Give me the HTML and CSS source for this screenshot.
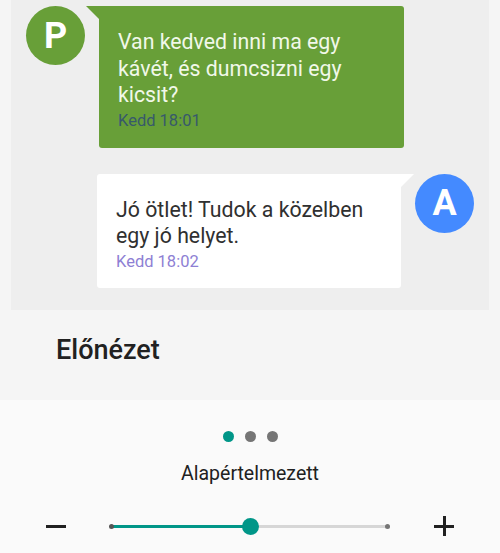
FILE: index.html
```html
<!DOCTYPE html>
<html lang="hu">
<head>
<meta charset="utf-8">
<link rel="stylesheet" href="styles.css">
</head>
<body>
<div class="top">
  <div class="chat">
    <div class="msg in">
      <div class="avatar green">P</div>
      <div class="bubble bubble-in">
        <div class="text">Van kedved inni ma egy kávét, és dumcsizni egy kicsit?</div>
        <div class="time">Kedd 18:01</div>
      </div>
    </div>
    <div class="msg out">
      <div class="bubble bubble-out">
        <div class="text">Jó ötlet! Tudok a közelben egy jó helyet.</div>
        <div class="time">Kedd 18:02</div>
      </div>
      <div class="avatar blue">A</div>
    </div>
  </div>
  <div class="preview">Előnézet</div>
</div>
<div class="controls">
  <div class="dots">
    <span class="dot active"></span>
    <span class="dot"></span>
    <span class="dot"></span>
  </div>
  <div class="label">Alapértelmezett</div>
  <div class="slider-row">
    <div class="minus"></div>
    <div class="track">
      <div class="fill"></div>
      <span class="end end-left"></span>
      <span class="end end-right"></span>
      <span class="thumb"></span>
    </div>
    <div class="plus"></div>
  </div>
</div>
</body>
</html>
```
FILE: styles.css
```css
* { box-sizing: border-box; }
html, body {
  margin: 0;
  padding: 0;
}
body {
  width: 500px;
  height: 553px;
  overflow: hidden;
  background: #fafafa;
  font-family: Roboto, "Noto Sans", sans-serif;
}
.top {
  background: #f5f5f5;
  padding: 0 11px;
}
.chat {
  background: #eeeeee;
  height: 310px;
  padding: 6px 15px 0 15px;
  display: flex;
  flex-direction: column;
  gap: 26px;
}
.msg {
  display: flex;
  align-items: flex-start;
  gap: 14px;
}
.msg.out {
  justify-content: flex-end;
}
.avatar {
  width: 59px;
  height: 59px;
  flex: none;
  border-radius: 50%;
  color: #ffffff;
  font-weight: 700;
  font-size: 36px;
  display: flex;
  align-items: center;
  justify-content: center;
}
.avatar.green { background: #689f38; }
.avatar.blue { background: #448aff; }
.bubble {
  position: relative;
  width: 304px;
  border-radius: 3px;
  padding: 23px 19px 17px 19px;
}
.bubble .text {
  font-size: 21.3px;
  line-height: 26.5px;
}
.bubble .time {
  font-size: 16.5px;
  line-height: 20px;
  margin-top: 2px;
}
.bubble-in {
  width: 305px;
  background: #689f38;
  border-top-left-radius: 0;
}
.bubble-in .text { color: #f1f8e9; }
.bubble-in .time { color: #37596b; }
.bubble-in::before {
  content: "";
  position: absolute;
  top: 0;
  left: -13px;
  width: 0;
  height: 0;
  border-top: 13px solid #689f38;
  border-left: 13px solid transparent;
}
.bubble-out {
  background: #ffffff;
  border-top-right-radius: 0;
  padding-bottom: 16px;
}
.bubble-out .text { color: #303030; }
.bubble-out .time { color: #8e7fd4; }
.bubble-out::before {
  content: "";
  position: absolute;
  top: 0;
  right: -13px;
  width: 0;
  height: 0;
  border-top: 13px solid #ffffff;
  border-right: 13px solid transparent;
}
.preview {
  height: 90px;
  display: flex;
  align-items: center;
  padding-left: 45px;
  padding-bottom: 10px;
  font-size: 27px;
  font-weight: 500;
  color: #212121;
}
.controls {
  background: #fafafa;
  height: 153px;
  padding-top: 30px;
}
.dots {
  display: flex;
  justify-content: center;
  gap: 11px;
  height: 12px;
  align-items: center;
}
.dot {
  width: 11px;
  height: 11px;
  border-radius: 50%;
  background: #757575;
}
.dot.active { background: #009688; }
.label {
  margin-top: 20px;
  text-align: center;
  font-size: 19.5px;
  line-height: 24px;
  color: #212121;
}
.slider-row {
  margin-top: 28px;
  height: 24px;
  display: flex;
  align-items: center;
  padding: 0 46px;
}
.minus {
  width: 20px;
  height: 3px;
  background: #212121;
  flex: none;
}
.track {
  position: relative;
  flex: 1;
  height: 3px;
  margin: 0 46px 0 45px;
  background: #d6d6d6;
}
.fill {
  width: 50%;
  height: 3px;
  background: #009688;
}
.end {
  position: absolute;
  top: -1px;
  width: 5px;
  height: 5px;
  border-radius: 50%;
  background: #555555;
}
.end-left { left: -2px; }
.end-right { right: -2px; background: #757575; }
.thumb {
  position: absolute;
  top: -7px;
  left: calc(50% - 8px);
  width: 17px;
  height: 17px;
  border-radius: 50%;
  background: #009688;
}
.plus {
  position: relative;
  width: 20px;
  height: 20px;
  flex: none;
}
.plus::before,
.plus::after {
  content: "";
  position: absolute;
  background: #212121;
}
.plus::before {
  left: 0;
  top: 8.5px;
  width: 20px;
  height: 3px;
}
.plus::after {
  top: 0;
  left: 8.5px;
  width: 3px;
  height: 20px;
}
```
